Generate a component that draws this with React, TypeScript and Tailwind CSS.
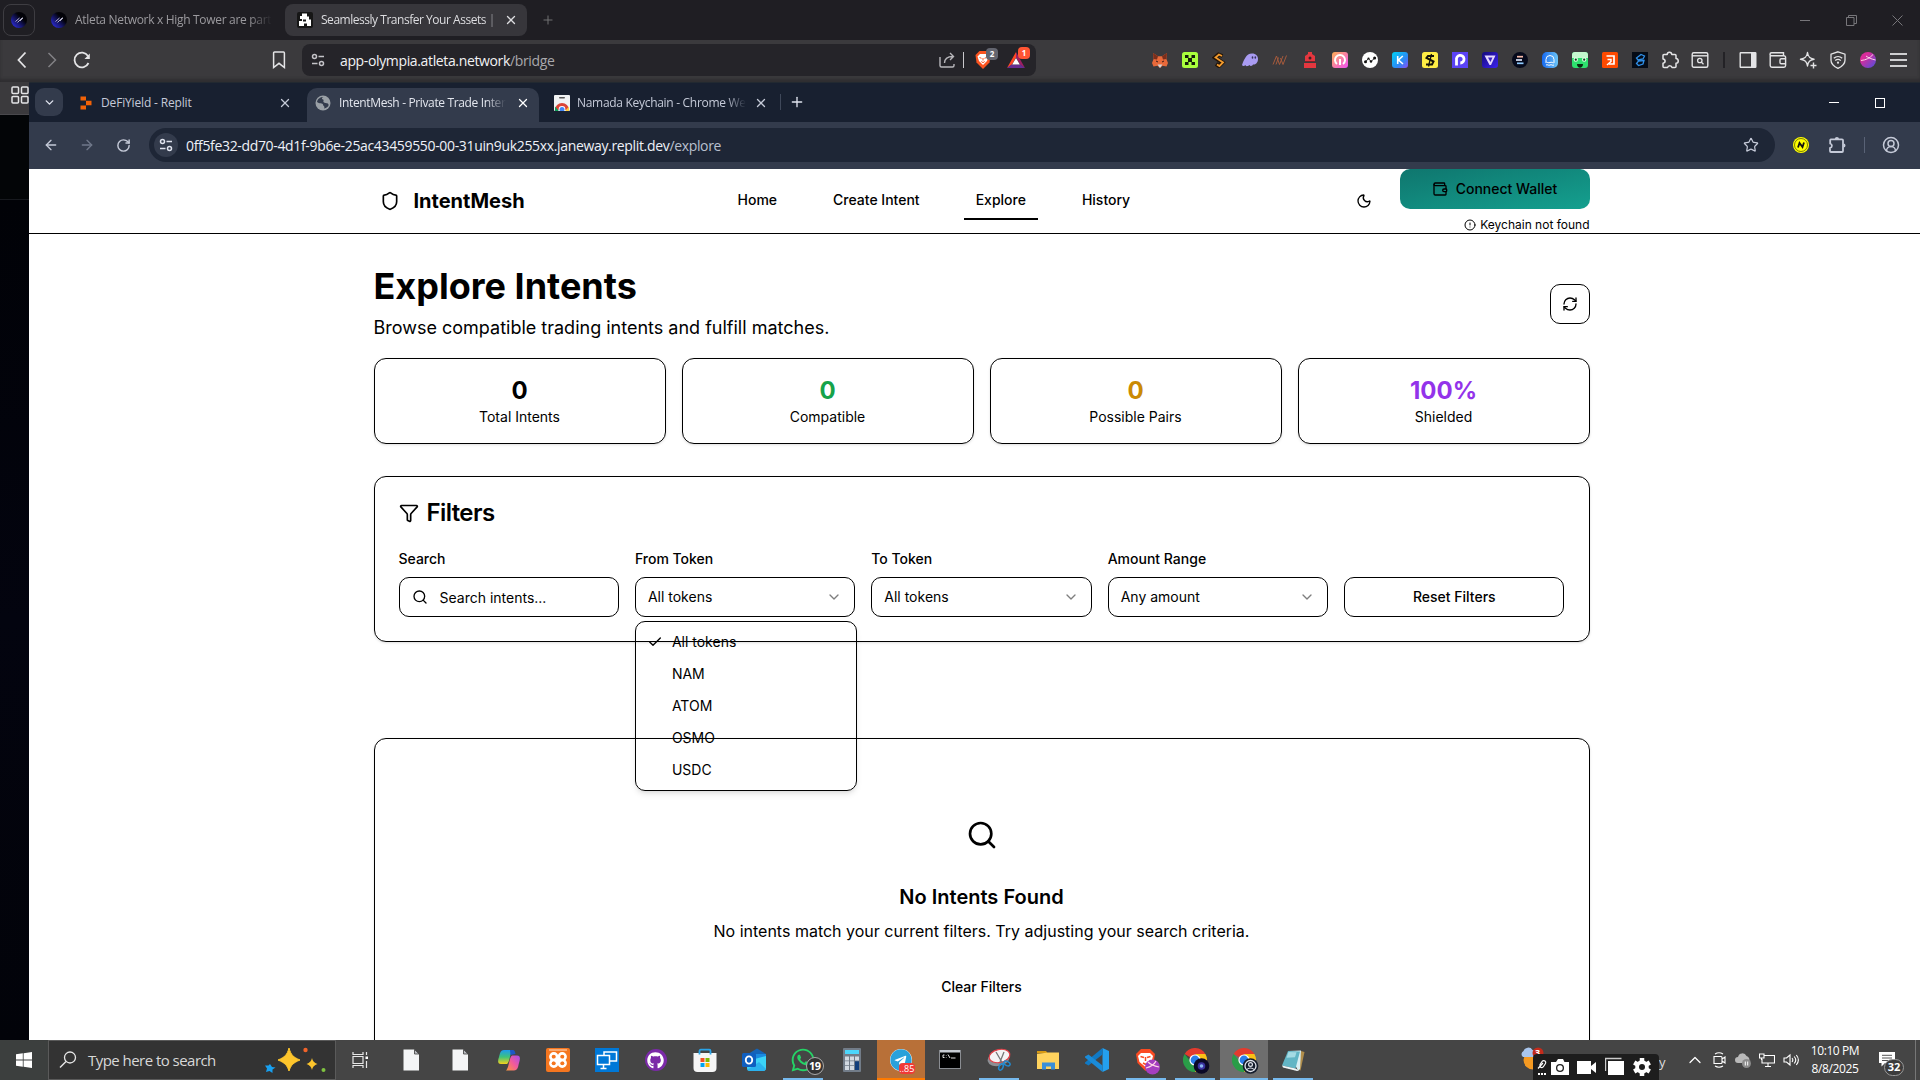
import React from "react";
import {
  Shield, Moon, Wallet, CircleAlert, RefreshCw, Search, ChevronDown, Check, Star, X, Plus,
  ArrowLeft, ArrowRight, RotateCw, CircleUserRound, ChevronUp, Funnel,
} from "lucide-react";
import { FaGithub, FaWhatsapp, FaTelegram } from "react-icons/fa";

const ui = "font-['Open_Sans','Noto_Sans',sans-serif]";

type SvgProps = { s?: number; vb?: string; className?: string; children: React.ReactNode };
const Svg = ({ s = 16, vb = "0 0 16 16", className = "", children }: SvgProps) => (
  <svg width={s} height={s} viewBox={vb} fill="none" className={`block shrink-0 ${className}`}>{children}</svg>
);

const Slot = ({ w, children, className = "" }: { w: string; children?: React.ReactNode; className?: string }) => (
  <div className={`flex h-full shrink-0 items-center justify-center ${w} ${className}`}>{children}</div>
);

const Atleta = () => (
  <Svg>
    <defs><linearGradient id="atl" x1="1" y1="0" x2="0" y2="1"><stop offset=".35" stopColor="#020208" /><stop offset="1" stopColor="#3434ff" /></linearGradient></defs>
    <circle cx="8" cy="8" r="8" fill="url(#atl)" />
    <path d="M4.500 9.500l4-3.500M6.500 10.500l5-5M9 9l3-3" stroke="#c5c5d8" strokeWidth=".9" />
  </Svg>
);

const Tune = ({ c }: { c: string }) => (
  <Svg s={16} className={c}>
    <circle cx="4.500" cy="4.500" r="2" stroke="currentColor" strokeWidth="1.500" />
    <path d="M8.500 4.500H14M2 11.500h5.500" stroke="currentColor" strokeWidth="1.500" />
    <circle cx="11.500" cy="11.500" r="2" stroke="currentColor" strokeWidth="1.500" />
  </Svg>
);

const extensions: React.ReactNode[] = [
  <Svg><path d="M1 1l5 3.200h4L15 1l-.6 6L16 11l-1.500 3.500-4-.8L8 16l-2.500-2.300-4 .8L0 11l1.600-4z" fill="#e8693a" /><path d="M1 1l5 3.200-1 3.300-3.400-.5zM15 1l-5 3.200 1 3.300 3.400-.5z" fill="#7a2e1c" /><path d="M5.500 12.500h5L8 16z" fill="#cdd3d8" /><path d="M4 9l2 1M12 9l-2 1" stroke="#3b1a18" /></Svg>,
  <Svg><rect width="16" height="16" rx="2.500" fill="#a9ff3c" /><path d="M3 3h3.500v3H3zM9.500 3H13v3H9.500zM6 6h4v4H6zM3 10h3.500v3H3zM9.500 10H13v3H9.500z" fill="#14200a" /></Svg>,
  <Svg><path d="M10.500 4L6.500 2.500 3 5.500l7.500 5-3.500 3.500-3-2" stroke="#221408" strokeWidth="4" /><path d="M10 4L7 2.500 3.500 5.500l7.500 5L7.500 14 5 12.500" stroke="#f19a2e" strokeWidth="1.800" /></Svg>,
  <Svg><path d="M0 13C2 8 4 1.500 10 1.500c4 0 6 2.500 6 5.500 0 4-3 6-5 5.500-1 2-3 1.500-3.500.5C5 15 3.500 14 3.500 13 2 14.500.5 14 0 13z" fill="#a99bf2" /><ellipse cx="10.500" cy="5.500" rx=".8" ry="1.200" fill="#37325a" /><ellipse cx="13.300" cy="5.500" rx=".8" ry="1.200" fill="#37325a" /></Svg>,
  <Svg><path d="M1 12.500L4.500 4l3 8.500L11 4M4 12.500L6.500 5.500M8.500 6l2.500 6.500L14.500 3.500" stroke="#a65a3c" strokeWidth="1" /></Svg>,
  <Svg><path d="M6 0h4v2l3 2v6H3V4l3-2z" fill="#e4373f" /><rect x="2" y="11" width="12" height="5" fill="#e4373f" /><circle cx="8" cy="6" r="1.500" fill="#3b2024" /><path d="M3 9.500h10" stroke="#7c2129" /></Svg>,
  <Svg><defs><linearGradient id="pk" x1="0" y1="0" x2="1" y2="1"><stop stopColor="#ffb054" /><stop offset="1" stopColor="#f04ff5" /></linearGradient></defs><rect width="16" height="16" rx="3" fill="url(#pk)" /><path d="M5 12a5 5 0 1 1 6 0" stroke="#fff" strokeWidth="2" /><path d="M8 7v6" stroke="#fff" strokeWidth="2" /></Svg>,
  <Svg><circle cx="8" cy="8" r="8" fill="#fff" /><path d="M3.500 9.800l3-3.300L9 9.500 12.800 6" stroke="#111" strokeWidth=".9" /><circle cx="3.500" cy="9.800" r="1.500" fill="#111" /><circle cx="6.500" cy="6.500" r="1.100" fill="#111" /><circle cx="9" cy="9.500" r="1.200" fill="#111" /><circle cx="12.600" cy="6" r="1.500" fill="#111" /></Svg>,
  <Svg><defs><linearGradient id="kp" x1="0" y1="0" x2="1" y2="1"><stop stopColor="#00d2f5" /><stop offset=".6" stopColor="#2b8cf4" /><stop offset="1" stopColor="#8a4df5" /></linearGradient></defs><rect width="16" height="16" rx="3" fill="url(#kp)" /><path d="M5.700 4v8M10.800 4L6.500 8l4.500 4" stroke="#fff" strokeWidth="1.600" /></Svg>,
  <Svg><rect width="16" height="16" rx="2.500" fill="#ffee45" /><path d="M12 4H6L4.500 6 11.500 9.500 10 12.500H4" stroke="#15140a" strokeWidth="2" /><path d="M9.500 2L6.500 14.500" stroke="#15140a" strokeWidth="1.300" /></Svg>,
  <Svg><rect width="16" height="16" fill="#5b43f5" /><path d="M4.500 13.500V8a3.800 3.800 0 1 1 3.800 3" stroke="#fff" strokeWidth="2.800" /></Svg>,
  <Svg><defs><linearGradient id="vv" x1="0" y1="0" x2="1" y2="1"><stop stopColor="#140a7a" /><stop offset="1" stopColor="#3d22ee" /></linearGradient></defs><rect width="16" height="16" rx="3" fill="url(#vv)" /><path d="M2.500 3.500h11L9 13H7.500z" fill="#e6d8ff" /><path d="M6 5.500h4.500L8.500 10z" fill="#3a22c0" /></Svg>,
  <Svg><circle cx="8" cy="8" r="8" fill="#060a1c" /><path d="M5 4.700h6" stroke="#f4b9a8" strokeWidth="1.700" /><path d="M4 8h6" stroke="#dfe8ff" strokeWidth="1.700" /><path d="M5 11.300h6.500" stroke="#8ecbff" strokeWidth="1.700" /></Svg>,
  <Svg><defs><linearGradient id="oc"><stop stopColor="#1769f0" /><stop offset="1" stopColor="#6cc5f7" /></linearGradient></defs><rect width="16" height="16" rx="5" fill="url(#oc)" /><path d="M4 10V7.500a4 4 0 0 1 8 0V10M3.500 10.500c1.500-1 3 1 4.500 0s3 1 4.500 0M4 13c1.500-1 2.500 1 4 0s2.500 1 4 0" stroke="#fff" strokeWidth="1" /></Svg>,
  <Svg><rect width="16" height="16" rx="3" fill="#2ee06e" /><path d="M0 6V3a3 3 0 0 1 3-3h10a3 3 0 0 1 3 3v3z" fill="#c4f8cf" /><circle cx="3.800" cy="7.500" r="2.200" fill="#dcffe2" /><circle cx="12.200" cy="7.500" r="2.200" fill="#dcffe2" /><circle cx="3.800" cy="7.700" r="1.100" fill="#0c3a1a" /><circle cx="12.200" cy="7.700" r="1.100" fill="#0c3a1a" /><path d="M5 12h6c0 5-6 5-6 0z" fill="#082a12" /></Svg>,
  <Svg><rect width="16" height="16" rx="1.500" fill="#ff4a00" /><path d="M4.500 4h7.500v8H7" stroke="#fff" strokeWidth="1.700" /><path d="M5.500 7.500h3.500v2L5 13" stroke="#fff" strokeWidth="1.500" /></Svg>,
  <Svg><rect width="16" height="16" fill="#050b16" /><path d="M4.500 6L9 2.500 12.500 4 11 7 6 8 4.500 6zM12 8.500L6.500 9 4.500 11.500l2 2 4.500-1.500z" stroke="#2f8fe8" strokeWidth="1.300" /></Svg>,
];

const Puzzle = () => (
  <Svg s={18} vb="0 0 18 18" className="text-[#e4e4e6]"><path d="M2 4.500a1 1 0 0 1 1-1h3.200C6 .7 10.500.2 10.800 3.500H14a1 1 0 0 1 1 1v3c3 .3 3 4.500 0 4.800V15.500a1 1 0 0 1-1 1h-3c-.4-2.500-4-2.500-4.400 0H3a1 1 0 0 1-1-1v-3.200c2.800-.4 2.800-4 0-4.400z" stroke="currentColor" strokeWidth="1.500" strokeLinejoin="round" /></Svg>
);

function OuterTabs() {
  return (
    <div className="flex h-10 shrink-0 items-center bg-[#1f1e23] text-[12px] text-[#9b9a9e]">
      <div className="ml-[3px] flex h-8 w-8 items-center justify-center rounded-lg border border-[#3e3d42]"><Atleta /></div>
      <div className="ml-[16px]"><Atleta /></div>
      <div className="ml-[8px] w-[197px] whitespace-nowrap tracking-[-0.31px] [mask-image:linear-gradient(to_right,black_88%,transparent)]">Atleta Network x High Tower are part</div>
      <div className="ml-[13px] flex h-8 w-[242px] items-center rounded-lg bg-[#37363b] text-[#dddde0]">
        <div className="ml-[12px]">
          <Svg><rect width="16" height="16" rx="2" fill="#161616" /><path d="M5 1.500h5v3h2v3h2V14h-4v-2.500H7V14H2V9h3V7H3V4h2z" fill="#fff" /><path d="M6 7.500h3v2H6z" fill="#161616" /></Svg>
        </div>
        <div className="ml-[8px] w-[173px] whitespace-nowrap tracking-[-0.47px] [mask-image:linear-gradient(to_right,black_94%,#0006)]">Seamlessly Transfer Your Assets |</div>
        <X size={14} strokeWidth={2.200} className="ml-[10px]" />
      </div>
      <Plus size={14} strokeWidth={1.600} className="ml-[14px] text-[#77767a]" />
      <div className="ml-auto flex h-full items-center text-[#77767a]">
        <Slot w="w-[46px]"><div className="h-px w-[10px] bg-current" /></Slot>
        <Slot w="w-[46px]"><Svg s={11} vb="0 0 11 11"><path d="M.5 2.500h7.500v8H.5zM2.500 2.500v-2h8v8H8" stroke="currentColor" /></Svg></Slot>
        <Slot w="w-[46px]"><Svg s={11} vb="0 0 11 11"><path d="M.5.5l10 10M10.500.5l-10 10" stroke="currentColor" /></Svg></Slot>
      </div>
    </div>
  );
}

function OuterToolbar() {
  return (
    <div className="flex h-[42px] shrink-0 items-center bg-[#3b3a3d] pb-[2px] text-[#e4e4e6] shadow-[inset_0_-3px_3px_#2f2e31]">
      <Slot w="w-[30px]" className="ml-[7px]"><Svg s={18} vb="0 0 18 18"><path d="M12.500 1.500L5.500 9l7 7.500" stroke="currentColor" strokeWidth="1.800" /></Svg></Slot>
      <Slot w="w-[30px]"><Svg s={18} vb="0 0 18 18" className="text-[#828185]"><path d="M5.500 2l7 7-7 7" stroke="currentColor" strokeWidth="1.500" /></Svg></Slot>
      <Slot w="w-[30px]"><Svg s={18} vb="0 0 18 18"><path d="M15.500 12A7.300 7.300 0 1 1 15 5" stroke="currentColor" strokeWidth="1.800" /><path d="M16.800 2.500v5.500h-5.300z" fill="currentColor" /></Svg></Slot>
      <Slot w="w-[30px]" className="ml-[167px]"><Svg s={18} vb="0 0 18 18"><path d="M4.500 1h9a.9.9 0 0 1 .9.9V16.500L9 12.300 3.600 16.500V1.900A.9.9 0 0 1 4.500 1z" stroke="currentColor" strokeWidth="1.500" /></Svg></Slot>
      <div className="ml-[8px] flex h-8 w-[734px] items-center rounded-lg bg-[#252429]">
        <div className="ml-[8px]"><Tune c="text-[#c4c3c8]" /></div>
        <div className="ml-[14px] text-[14px] tracking-[-0.36px] text-[#f2f2f4]">app-olympia.atleta.network<span className="text-[#a9a8ac]">/bridge</span></div>
        <div className="ml-auto flex h-full items-center">
          <Slot w="w-[20px]"><Svg s={18} vb="0 0 18 18" className="text-[#b8b7bb]"><path d="M2 6v8.500a1.500 1.500 0 0 0 1.500 1.500h11a1.500 1.500 0 0 0 1.500-1.500V13M6.500 12c0-4 2.500-6.500 8.500-6.500M12 2l3.500 3.500L12 9" stroke="currentColor" strokeWidth="1.400" /></Svg></Slot>
          <div className="ml-[6px] h-4 w-px bg-[#c9c8cc]" />
          <div className="relative ml-[10px]">
            <Svg s={18} vb="0 0 18 18"><path d="M5.500 0h7L16.500 4l-1 7.500L9 18l-6.500-6.500L1.500 4z" fill="#fb5420" /><path d="M6 3h6l2.500 2.500-1.500 4.500L9 14 5 10 3.500 5.500z" fill="#fff" /><path d="M5.500 6.500l2 .8M12.500 6.500l-2 .8M9 7v2.500M7.300 10.500L9 11.700l1.700-1.200" stroke="#fb5420" strokeWidth="1" /></Svg>
            <div className="absolute -top-[3px] left-[12px] flex h-3 w-3 items-center justify-center rounded bg-[#63656f] text-[8px] font-bold text-white">2</div>
          </div>
          <div className="relative mr-[11px] ml-[15px]">
            <Svg s={18} vb="0 0 18 18"><path d="M9 1v5.500L5 13.500 0 17z" fill="#ff4724" /><path d="M9 1l9 16-5-3.500-4-7z" fill="#9e1f63" /><path d="M0 17l4.500-3.500h9L18 17z" fill="#662d91" /><path d="M9 7l3.800 6.500H5.200z" fill="#fff" /></Svg>
            <div className="absolute -top-[4px] left-[11px] flex h-3 w-3 items-center justify-center rounded bg-[#ff5533] text-[8px] font-bold text-white">1</div>
          </div>
        </div>
      </div>
      <div className="ml-[109px] flex h-full items-center">
        {extensions.map((e, i) => <Slot key={i} w="w-[30px]">{e}</Slot>)}
        <Slot w="w-[30px]"><Puzzle /></Slot>
        <Slot w="w-[30px]"><Svg s={18} vb="0 0 18 18"><rect x="1.200" y="1.700" width="15.600" height="14.600" rx="1.500" stroke="currentColor" strokeWidth="1.400" /><path d="M1 4.800h16" stroke="currentColor" strokeWidth="1.400" /><circle cx="8.800" cy="9.500" r="2.200" stroke="currentColor" strokeWidth="1.300" /><path d="M10.500 11.200l2 2" stroke="currentColor" strokeWidth="1.300" /></Svg></Slot>
        <Slot w="w-[18px]"><div className="h-4 w-[2px] bg-[#232226]" /></Slot>
        <Slot w="w-[30px]"><Svg s={18} vb="0 0 18 18"><rect x="1.200" y="1.700" width="15.600" height="14.600" rx=".5" stroke="currentColor" strokeWidth="1.400" /><path d="M12 2h5v14h-5z" fill="currentColor" /></Svg></Slot>
        <Slot w="w-[30px]"><Svg s={18} vb="0 0 18 18"><path d="M1.200 4v10.500a1.700 1.700 0 0 0 1.700 1.700h12a1.700 1.700 0 0 0 1.700-1.700V6.500a1.700 1.700 0 0 0-1.700-1.700H2.500a1.200 1.200 0 0 1 0-3H14.500v3M17 7.800h-4.800a1.200 1.200 0 0 0-1.200 1.200v2.500a1.200 1.200 0 0 0 1.200 1.200H17" stroke="currentColor" strokeWidth="1.400" /></Svg></Slot>
        <Slot w="w-[30px]"><Svg s={18} vb="0 0 18 18"><path d="M8.500 1.500c.6 4.500 2.200 6.100 6.500 6.800-4.300.6-5.900 2.200-6.500 6.700C7.900 10.500 6.200 8.900 1.500 8.300 6.200 7.600 7.900 6 8.500 1.500zM14.500 11.500v6M11.500 14.500h6" stroke="currentColor" strokeWidth="1.400" strokeLinejoin="round" /></Svg></Slot>
        <Slot w="w-[30px]"><Svg s={18} vb="0 0 18 18"><path d="M9 .8l7 2.400v6c0 4-3.500 6.500-7 8.200-3.500-1.700-7-4.200-7-8.200v-6zM4.800 7.300c2.500-2.300 6-2.300 8.400 0M6.200 9.600c1.700-1.500 4-1.500 5.600 0" stroke="currentColor" strokeWidth="1.300" /><circle cx="9" cy="11.700" r="1.100" fill="currentColor" /></Svg></Slot>
        <Slot w="w-[30px]"><Svg><defs><linearGradient id="prf" x1="0" y1="0" x2="1" y2="1"><stop offset=".3" stopColor="#d92c9b" /><stop offset="1" stopColor="#4b4fe0" /></linearGradient></defs><circle cx="8" cy="8" r="8" fill="url(#prf)" /><path d="M1 8.500c5-.5 9-2.500 12-6M6 4c2.500 2 5.500 3 9.500 4" stroke="#ffd6e6" strokeWidth="1" /></Svg></Slot>
        <Slot w="w-[30px]"><div className="flex w-[17px] flex-col gap-[4px]"><div className="h-[2px] bg-[#cfcfd1]" /><div className="h-[2px] bg-[#cfcfd1]" /><div className="h-[2px] bg-[#cfcfd1]" /></div></Slot>
      </div>
    </div>
  );
}

function InnerChrome() {
  return (
    <>
      <div className="flex h-10 shrink-0 items-end border-t border-[#222931] bg-[#182030] text-[12px] text-[#c5cad8]">
        <div className="mb-[6px] ml-[6px] flex h-7 w-7 items-center justify-center rounded-[9px] bg-[#333b4c]"><ChevronDown size={13} strokeWidth={2.600} className="text-[#dfe3ee]" /></div>
        <div className="flex h-[34px] w-[244px] items-center pb-[5px]">
          <Svg className="ml-[15px]"><path d="M2.500 1.500h5.500v4H2.500zM8 5.800h5.500v4.400H8zM2.500 10.500h5.500v4H2.500z" fill="#f26207" /></Svg>
          <div className="ml-[7px] tracking-[-0.16px]">DeFiYield - Replit</div>
          <X size={14} strokeWidth={2.200} className="mr-[15px] ml-auto" />
        </div>
        <div className="flex h-[34px] w-[232px] items-center rounded-t-[10px] bg-[#333b4c] pb-[5px] text-[#e3e6ee]">
          <Svg className="ml-[8px]"><circle cx="8" cy="8" r="7.500" fill="#9aa0a6" /><path d="M8.500 2c-2 .5-2 2-.5 2.500s-.5 2 1 3 4 0 4.500 2-2 3.500-4.500 4c1.500-2-1-2.500-1-4S4 9 2 7C2.500 4 5 2 8.500 2z" fill="#333b4c" /></Svg>
          <div className="ml-[8px] w-[167px] whitespace-nowrap tracking-[-0.36px] [mask-image:linear-gradient(to_right,black_88%,transparent)]">IntentMesh - Private Trade Inter</div>
          <X size={14} strokeWidth={2.200} className="mr-auto ml-[10px] text-white" />
        </div>
        <div className="flex h-[34px] w-[241px] items-center pb-[5px]">
          <Svg className="ml-[15px]"><rect width="16" height="16" rx="1" fill="#f1f3f4" /><rect x="5" y="2" width="6" height="1.600" rx=".8" fill="#555" /><path d="M1 15a7 7 0 0 1 14 0z" fill="#db4437" /><path d="M1 11.500L5 16H1z" fill="#0f9d58" /><path d="M15 11.500L11 16h4z" fill="#ffcd40" /><circle cx="8" cy="14.500" r="3.400" fill="#fff" /><circle cx="8" cy="14.500" r="2.500" fill="#4285f4" /></Svg>
          <div className="ml-[7px] w-[169px] whitespace-nowrap tracking-[-0.3px] [mask-image:linear-gradient(to_right,black_88%,transparent)]">Namada Keychain - Chrome We</div>
          <X size={14} strokeWidth={2.200} className="ml-[8px]" />
        </div>
        <div className="mb-[12px] h-4 w-px bg-[#3f485a]" />
        <Plus size={16} strokeWidth={2} className="mb-[12px] ml-[8px] text-[#dfe3ee]" />
        <div className="ml-auto flex h-full items-center text-white">
          <Slot w="w-[46px]"><div className="h-px w-[10px] bg-current" /></Slot>
          <Slot w="w-[46px]"><div className="h-[10px] w-[10px] border border-white" /></Slot>
          <div className="w-[17px]" />
        </div>
      </div>
      <div className="flex h-[47px] shrink-0 items-center bg-[#333b4c] pb-px text-[#c5cad8]">
        <Slot w="w-[36px]" className="ml-[4px]"><ArrowLeft size={16} strokeWidth={2} /></Slot>
        <Slot w="w-[36px]"><ArrowRight size={16} strokeWidth={2} className="text-[#70788a]" /></Slot>
        <Slot w="w-[36px]"><RotateCw size={15} strokeWidth={2.300} /></Slot>
        <div className="ml-[8px] flex h-[34px] w-[1626px] items-center rounded-full bg-[#1e2636]">
          <div className="ml-[5px] flex h-6 w-6 items-center justify-center rounded-full bg-[#333b4c]"><Tune c="text-[#dfe3ee]" /></div>
          <div className="ml-[8px] text-[14px] tracking-[-0.34px] text-[#eef1f8]">0ff5fe32-dd70-4d1f-9b6e-25ac43459550-00-31uin9uk255xx.janeway.replit.dev<span className="text-[#b9c0cf]">/explore</span></div>
          <Star size={16} strokeWidth={1.800} className="mr-[16px] ml-auto" />
        </div>
        <Slot w="w-[36px]" className="ml-[8px]"><Svg><circle cx="8" cy="8" r="8" fill="#ffff00" /><circle cx="8" cy="8" r="6.500" stroke="#44440a" strokeWidth=".7" /><path d="M5 10.500l1.500-4.500 3 4L11 5.500" stroke="#111" strokeWidth="1.800" /></Svg></Slot>
        <Slot w="w-[36px]"><Svg s={18} vb="0 0 18 18"><path d="M2.200 4.500A1 1 0 0 1 3 3.300h11a1 1 0 0 1 1 1V15a1 1 0 0 1-1 1H3a1 1 0 0 1-1-1v-3c2.500-.7 2.500-3.800.2-4.500z" stroke="currentColor" strokeWidth="1.800" /><path d="M6.800 3a2.100 2.100 0 0 1 4.200 0zM15.500 7.500a2 2 0 0 1 0 4z" fill="currentColor" /></Svg></Slot>
        <Slot w="w-[18px]"><div className="h-4 w-px bg-[#596276]" /></Slot>
        <Slot w="w-[36px]"><CircleUserRound size={18} strokeWidth={2} /></Slot>
      </div>
    </>
  );
}

const Stat = ({ v, l, c }: { v: string; l: string; c: string }) => (
  <div className="flex-1 rounded-xl border border-black p-4 text-center shadow-sm">
    <div className={`text-2xl font-bold ${c}`}>{v}</div>
    <div className="text-sm">{l}</div>
  </div>
);

const Select = ({ label, value, menu }: { label: string; value: string; menu?: React.ReactNode }) => (
  <div className="relative flex flex-col gap-2">
    <div className="text-sm font-medium">{label}</div>
    <div className="flex h-10 items-center justify-between rounded-[10px] border border-black px-3 text-sm">
      {value}<ChevronDown size={16} className="opacity-50" />
    </div>
    {menu}
  </div>
);

const tokens = ["All tokens", "NAM", "ATOM", "OSMO", "USDC"];

function Page() {
  return (
    <div className="min-h-0 flex-1 overflow-hidden bg-white font-['Inter',sans-serif] text-black">
      <div className="h-[65px] border-b border-black pl-[344.5px]">
        <div className="flex h-16 w-[1216px] justify-between">
          <div className="flex w-[352px] items-center">
            <div className="flex h-8 w-8 items-center justify-center"><Shield size={20} /></div>
            <div className="ml-2 text-xl font-bold">IntentMesh</div>
          </div>
          <div className="flex flex-1 items-center gap-8 pb-[2px] text-sm font-medium">
            <div className="px-3">Home</div>
            <div className="px-3">Create Intent</div>
            <div className="relative px-3 py-2">Explore<div className="absolute inset-x-0 -bottom-[2px] h-[2px] bg-black" /></div>
            <div className="px-3">History</div>
          </div>
          <div className="flex">
            <div className="mr-[28px] flex items-center"><Moon size={16} /></div>
            <div className="flex flex-col items-end">
              <div className="flex h-10 w-[190px] items-center justify-center gap-2 rounded-[10px] bg-gradient-to-br from-[#0f766e] to-[#14a08f] text-sm font-medium"><Wallet size={16} />Connect Wallet</div>
              <div className="mt-2 flex items-center gap-1 text-xs"><CircleAlert size={12} />Keychain not found</div>
            </div>
          </div>
        </div>
      </div>
      <div className="ml-[344.5px] w-[1216px] pt-8">
        <div className="flex items-center justify-between">
          <div>
            <div className="text-4xl font-bold">Explore Intents</div>
            <div className="mt-[8px] text-lg">Browse compatible trading intents and fulfill matches.</div>
          </div>
          <div className="flex h-10 w-10 items-center justify-center rounded-[10px] border border-black"><RefreshCw size={16} /></div>
        </div>
        <div className="mt-4 flex gap-4">
          <Stat v="0" l="Total Intents" c="text-black" />
          <Stat v="0" l="Compatible" c="text-[#16a34a]" />
          <Stat v="0" l="Possible Pairs" c="text-[#ca8a04]" />
          <Stat v="100%" l="Shielded" c="text-[#9333ea]" />
        </div>
        <div className="mt-8 rounded-xl border border-black p-6 shadow-sm">
          <div className="flex h-6 items-center gap-2 text-2xl font-semibold tracking-tight"><Funnel size={20} />Filters</div>
          <div className="mt-6 grid grid-cols-5 gap-4">
            <div className="flex flex-col gap-2">
              <div className="text-sm font-medium">Search</div>
              <div className="flex h-10 items-center gap-3 rounded-[10px] border border-black px-3 text-sm"><Search size={16} /><span className="pt-[2px]">Search intents...</span></div>
            </div>
            <Select label="From Token" value="All tokens" menu={
              <div className="absolute top-[72px] left-0 z-10 w-[222px] rounded-[10px] border border-black p-1 text-sm shadow-md">
                {tokens.map((t, i) => (
                  <div key={t} className="flex h-8 items-center">
                    <div className="flex w-8 justify-center pr-[2px]">{i === 0 && <Check size={16} />}</div>{t}
                  </div>
                ))}
              </div>
            } />
            <Select label="To Token" value="All tokens" />
            <Select label="Amount Range" value="Any amount" />
            <div className="flex items-end"><div className="flex h-10 w-full items-center justify-center rounded-[10px] border border-black text-sm font-medium">Reset Filters</div></div>
          </div>
        </div>
        <div className="mt-24 flex h-[420px] flex-col items-center rounded-xl border border-black pt-20 shadow-sm">
          <Search size={32} />
          <div className="mt-[32px] text-xl font-semibold">No Intents Found</div>
          <div className="mt-[8px]">No intents match your current filters. Try adjusting your search criteria.</div>
          <div className="mt-[34px] text-sm font-medium">Clear Filters</div>
        </div>
      </div>
    </div>
  );
}

const FileIcon = () => <Svg s={24} vb="0 0 24 24"><path d="M4.500 1.500h11l4.500 4.500v16.500h-15.500z" fill="#f4f5f6" /><path d="M15.500 1.500v4.500h4.500z" fill="#b9bcc0" stroke="#3c3c3c" strokeWidth=".8" /></Svg>;
const Chrome = ({ children }: { children: React.ReactNode }) => (
  <Svg s={28} vb="0 0 28 28" className="-mb-1 ml-1">
    <path d="M12 12L1.600 6A12 12 0 0 1 22.400 6H12z" fill="#e33b2e" />
    <path d="M12 12L22.400 6A12 12 0 0 1 12 24z" fill="#fbc116" />
    <path d="M1.600 6A12 12 0 0 0 12 24l4-9-8-1z" fill="#2a9d48" />
    <path d="M12 6h10.400l-4 8z" fill="#fbc116" />
    <circle cx="12" cy="12" r="5.600" fill="#fff" /><circle cx="12" cy="12" r="4.400" fill="#2b7de9" />
    {children}
  </Svg>
);

type App = { icon: React.ReactNode; bg?: string; line?: string };
const apps: App[] = [
  { icon: <FileIcon /> },
  { icon: <FileIcon /> },
  { icon: <Svg s={24} vb="0 0 24 24"><defs><linearGradient id="cp1" x1="0" y1="0" x2="0" y2="1"><stop stopColor="#1d9bf0" /><stop offset=".5" stopColor="#3fc37a" /><stop offset="1" stopColor="#f7d21c" /></linearGradient><linearGradient id="cp2" x1="1" y1="0" x2="0" y2="1"><stop stopColor="#a64df0" /><stop offset=".5" stopColor="#f25a9a" /><stop offset="1" stopColor="#fa9a3c" /></linearGradient></defs><path d="M7 2h9c-3 2-3 12-6 14H4c-4 0-3-4-2-7s1-7 5-7z" fill="url(#cp1)" /><path d="M13 2h3c1.500 0 2 2 2.500 4l-5 1z" fill="#1d56c8" /><path d="M17 22.500H9c3-2 3-13 6-15h5c4 0 3 4 2 7.500s-1 7.500-5 7.500z" fill="url(#cp2)" /></Svg> },
  { icon: <Svg s={24} vb="0 0 24 24"><rect width="24" height="24" rx="2" fill="#f5761f" /><rect x="3" y="1" width="18" height="2" fill="#f9ab73" /><circle cx="7.800" cy="8.700" r="3.300" stroke="#fff" strokeWidth="2.800" /><circle cx="16.200" cy="8.700" r="3.300" stroke="#fff" strokeWidth="2.800" /><circle cx="7.800" cy="15.300" r="3.300" stroke="#fff" strokeWidth="2.800" /><circle cx="16.200" cy="15.300" r="3.300" stroke="#fff" strokeWidth="2.800" /><path d="M10 9.500h4v5h-4z" fill="#fff" /><circle cx="7.500" cy="8.700" r="1.800" fill="#f5761f" /><circle cx="16.500" cy="8.700" r="1.800" fill="#f5761f" /><circle cx="7.500" cy="15.300" r="1.800" fill="#f5761f" /><circle cx="16.500" cy="15.300" r="1.800" fill="#f5761f" /></Svg> },
  { icon: <Svg s={24} vb="0 0 24 24"><rect width="24" height="24" fill="#0078d7" /><path d="M9 7.500V4h12.500v9H15M2.500 7.500h12v9h-12zM8.500 16.500v4M5.500 20.500h6" stroke="#fff" strokeWidth="1.500" /></Svg> },
  { icon: <div className="flex h-[22px] w-[22px] items-center justify-center rounded-full bg-[#7b2aa8] text-white"><FaGithub size={17} /></div> },
  { icon: <Svg s={24} vb="0 0 24 24"><path d="M6.500 7V3a1.300 1.300 0 0 1 1.300-1.300h8.400A1.300 1.300 0 0 1 17.500 3v4" stroke="#2aa5ea" strokeWidth="1.800" /><path d="M.5 5h23v15a4 4 0 0 1-4 4h-15a4 4 0 0 1-4-4z" fill="#f5f5f5" /><path d="M6.500 5v1.500M17.500 5v1.500" stroke="#2aa5ea" strokeWidth="1.800" /><path d="M7.500 10h4v4h-4z" fill="#f25022" /><path d="M12.500 10h4v4h-4z" fill="#7fba00" /><path d="M7.500 15h4v4h-4z" fill="#00a4ef" /><path d="M12.500 15h4v4h-4z" fill="#ffb900" /></Svg> },
  { icon: <Svg s={24} vb="0 0 24 24"><path d="M6 6l9-5.500L24 6v7H6z" fill="#1464b8" /><path d="M12 6l12 0v4l-12 5z" fill="#1a8ae0" /><path d="M5 13l19-5v12a3 3 0 0 1-3 3H8a3 3 0 0 1-3-3z" fill="#3bd3f7" /><path d="M5 22L17 14l7 7-2 2H8z" fill="#2bb2ee" /><rect x="0" y="5" width="14" height="14" rx="1.500" fill="#0f5fc0" /><ellipse cx="7" cy="12" rx="3.200" ry="3.600" stroke="#fff" strokeWidth="1.900" /></Svg> },
  { line: "bg-[#76b9ed]", icon: <div className="relative text-[#25d366]"><FaWhatsapp size={26} /><div className="absolute top-[10px] left-[16px] flex h-[18px] w-[18px] items-center justify-center rounded-full border border-[#aaa] bg-[#333] text-[11px] font-bold tracking-tighter text-white">19</div></div> },
  { icon: <Svg s={24} vb="0 0 24 24"><rect x="3" width="18" height="24" rx="1" fill="#727c88" /><rect x="5" y="2" width="14" height="4" fill="#4cd6fb" /><path d="M5 8.500h4v4H5zM10 8.500h4v4h-4zM15 8.500h4v4h-4zM5 13.300h4v4H5zM10 13.300h4v4h-4zM5 18h4v4H5zM10 18h4v4h-4z" fill="#d3dae2" /><path d="M15 13.300h4V22h-4z" fill="#123f7c" /></Svg> },
  { bg: "bg-[#b87038]", line: "bg-[#ff7a00]", icon: <div className="relative"><div className="rounded-full bg-white text-[#2aa1da]"><FaTelegram size={22} /></div><div className="absolute top-[14px] left-[9px] flex h-[11px] w-4 items-center justify-center rounded-sm bg-[#f03a37] text-[9px] leading-none text-white">..85</div></div> },
  { icon: <Svg s={24} vb="0 0 24 24"><rect x="1.500" y="2.500" width="21" height="18" fill="#000" stroke="#8a8d92" /><rect x="2" y="2" width="20" height="2.500" fill="#c6cbd2" /><path d="M6.500 7H5v2.500h1.500M8.300 7.300v.5M8.300 9v.5M10 6.500l2 3.500M13 10h4.500" stroke="#ddd" strokeWidth="1" /></Svg> },
  { line: "bg-[#76b9ed]", icon: <Svg s={24} vb="0 0 24 24"><ellipse cx="11.500" cy="11" rx="11" ry="7" transform="rotate(-12 11.500 11)" fill="#8c8f94" /><ellipse cx="12.500" cy="8" rx="10.500" ry="6.500" transform="rotate(-12 12.500 8)" fill="#f4f4f5" stroke="#e04048" strokeWidth="1.200" /><path d="M9 4l7 12M17 4l-4 10" stroke="#777" strokeWidth="1.300" /><ellipse cx="14" cy="19" rx="2" ry="3.300" transform="rotate(25 14 19)" stroke="#2289cf" strokeWidth="1.500" /><ellipse cx="20" cy="15.500" rx="3.300" ry="2" transform="rotate(25 20 15.500)" stroke="#2289cf" strokeWidth="1.500" /></Svg> },
  { icon: <Svg s={24} vb="0 0 24 24"><path d="M1 3h9l2 2.500H1z" fill="#d79a14" /><path d="M1 6l11-1.500h11V21H1z" fill="#ffd35e" /><path d="M6 21.500v-7h13v7h-4v-3h-5v3z" fill="#3a8fd8" /></Svg> },
  { icon: <Svg s={24} vb="0 0 24 24"><path d="M17.500 0L24 3v18l-6.500 3z" fill="#24a0ee" /><path d="M17.500 0v6.500L3.500 17.500 0 15.500v-1z" fill="#1079c4" /><path d="M17.500 24v-6.500L3.500 6.500 0 8.500v1z" fill="#1a8bd8" /></Svg> },
  { line: "bg-[#76b9ed]", icon: <Svg s={26} vb="0 0 26 26" className="-mb-1 ml-1"><path d="M6 0h9l5 5-1.500 9-8 8-8-8L1 5z" fill="#fb4b22" /><path d="M6 4h9l3 3-1.500 6-6 5-6-5L3 7z" fill="#fff" /><path d="M5.500 7.500l3.500 1M15.500 7.500l-3.500 1M10.500 8v4M8 14l2.500 1.500L13 14" stroke="#fb4b22" strokeWidth="1.500" /><circle cx="17.500" cy="18" r="7.500" fill="#a53ec0" /><path d="M11 19c4-1 8-3 10-7M13 13c3 3 6 4 11 5" stroke="#ffd6e6" strokeWidth="1.200" /></Svg> },
  { line: "bg-[#76b9ed]", icon: <Chrome><circle cx="18.500" cy="18" r="7.800" fill="#0b0926" /><circle cx="18.500" cy="18" r="3.800" fill="#3a32a0" /><circle cx="18.500" cy="18" r="1.800" fill="#8ab7f0" /></Chrome> },
  { bg: "bg-[#6e6e6e]", line: "bg-[#76b9ed]", icon: <Chrome><circle cx="18.500" cy="18" r="7.800" fill="#141c2c" /><circle cx="18.500" cy="18" r="5.500" stroke="#e2e6ee" strokeWidth="1.300" /><circle cx="18.500" cy="16.500" r="1.900" stroke="#e2e6ee" strokeWidth="1.200" /><path d="M15 21.500c1.500-2 5.500-2 7 0" stroke="#e2e6ee" strokeWidth="1.200" /></Chrome> },
  { line: "bg-[#76b9ed]", icon: <Svg s={24} vb="0 0 24 24"><path d="M20 3l3.500 1-4 18.500-3-1z" fill="#b08d4a" /><path d="M7 3l13-.5L19 21l-2 1.500z" fill="#d9eef3" /><path d="M7 3l12 .5-4.500 17L1 17.500z" fill="#62b5c5" /><path d="M1 17.500l13.500 3 3.500 2-2 .5-14-3.500z" fill="#eef5f7" /><path d="M7.500 4l8 .3-1.500 5-8.500.5z" fill="#a5dbe4" /></Svg> },
];

function Taskbar() {
  return (
    <div className={`flex h-10 shrink-0 bg-[#454545] text-white ${ui}`}>
      <Slot w="w-[48px]" className="bg-[#3c3f3e]"><Svg><path d="M0 2.300L6.800 1.300v6.300H0zM7.600 1.200L16 0v7.600H7.600zM0 8.400h6.800v6.300L0 13.700zM7.600 8.400H16V16l-8.400-1.200z" fill="#fff" /></Svg></Slot>
      <div className="flex w-[288px] items-center border border-[#5a5a5a] bg-[#333]">
        <Svg s={18} vb="0 0 18 18" className="ml-[10px]"><circle cx="11" cy="6.500" r="5.500" stroke="#e6e6e6" strokeWidth="1.300" /><path d="M7 10.500L1 16.500" stroke="#e6e6e6" strokeWidth="1.400" /></Svg>
        <div className="ml-[11px] text-[15px] tracking-[-0.54px] whitespace-nowrap text-[#d8d8d8]">Type here to search</div>
        <svg width="62" height="28" viewBox="0 0 62 28" className="mr-[9px] ml-auto">
          <path d="M25 2c2 7 4 9 11 12-7 3-9 5-11 11-2-6-4-8-11-11 7-3 9-5 11-12z" fill="#fdc52c" stroke="#fdc52c" strokeLinejoin="round" />
          <path d="M48 12c1 3.500 2 4.500 5.500 6-3.500 1.500-4.500 2.500-5.500 6-1-3.500-2-4.500-5.500-6 3.500-1.500 4.500-2.500 5.500-6z" fill="#fdc52c" />
          <path d="M6 18l2 3 3.500.5-3 2 0 3.500-3-2-3.500 1 1-3.500-2-3 3.500 0z" fill="#18a0f0" /><circle cx="41.500" cy="4" r="2.200" fill="#f1632a" /><circle cx="59.500" cy="24" r="2" fill="#7fc241" />
        </svg>
      </div>
      <Slot w="w-[48px]"><Svg s={18} vb="0 0 18 18"><path d="M2 5.500h10v7H2zM2 1v2.500h10V1M2 17v-2.500h10V17M15.500 1v3M15.500 10v7" stroke="#e8e8e8" strokeWidth="1.200" /><path d="M14.500 5.500h2.500V8h-2.500z" fill="#fff" /></Svg></Slot>
      <div className="ml-[2.5px] flex gap-[1.04px]">
        {apps.map((a, i) => (
          <div key={i} className={`relative flex w-12 items-center justify-center ${a.bg ?? ""}`}>
            {a.icon}
            {a.line && <div className={`absolute bottom-0 h-[2px] ${a.bg ? "inset-x-0" : "inset-x-1"} ${a.line}`} />}
          </div>
        ))}
      </div>
      <div className="relative ml-auto w-[163px]">
        <Svg s={26} vb="0 0 26 26" className="mt-[6px]"><circle cx="13" cy="14" r="9.500" fill="#f59a22" /><path d="M3 11a3.500 3.500 0 0 1 .5-6 5 5 0 0 1 9-1A3.500 3.500 0 0 1 13 11z" fill="#a9c6ee" /><circle cx="18" cy="7" r="5.500" fill="#c42b1c" /></Svg>
        <div className="absolute top-[6px] left-[15px] text-[9px] font-bold">3</div>
        <div className="absolute top-[14px] left-[139px] text-[13px] leading-4 text-[#ddd]">y</div>
        <div className="absolute top-[14px] left-[13px] flex h-[26px] w-[126px] items-center rounded-t bg-[#1d1d1d] pl-[3px]">
          <div className="flex w-3 flex-col items-center gap-1"><Svg s={10} vb="0 0 10 10"><path d="M3 5.500l2.500-3.500a2 2 0 0 1 3 2.500L6.500 7.500a2 2 0 0 1-3.500 0zM1 9.500L6 4" stroke="#fff" strokeWidth="1.200" /></Svg><div className="flex gap-[1px]"><i className="size-[2px] bg-white" /><i className="size-[2px] bg-white" /><i className="size-[2px] bg-white" /></div></div>
          <Svg s={20} vb="0 0 20 20" className="ml-[2px]"><path d="M1 5h5l2-3h5l1.500 3H19v13H1z" fill="#fff" /><circle cx="10" cy="11" r="4" fill="#1d1d1d" /><circle cx="10" cy="11" r="2.700" fill="#fff" /></Svg>
          <Svg s={20} vb="0 0 20 20" className="ml-[7px]"><path d="M0 4h14v5l5-4v11l-5-4v5H0z" fill="#fff" /></Svg>
          <Svg s={20} vb="0 0 20 20" className="ml-[8px]"><path d="M.5 14V1.500h16" stroke="#ccc" strokeWidth="1.400" /><path d="M3 4h16v14H3z" fill="#fff" /></Svg>
          <Svg s={20} vb="0 0 20 20" className="ml-[7px]"><path d="M10 1v18M2.200 5.500l15.600 9M2.200 14.500l15.600-9" stroke="#fff" strokeWidth="4.500" /><circle cx="10" cy="10" r="6.800" fill="#fff" /><circle cx="10" cy="10" r="3" fill="#1d1d1d" /></Svg>
        </div>
      </div>
      <Slot w="w-[24px]"><ChevronUp size={20} strokeWidth={1.500} /></Slot>
      <Slot w="w-[24px]"><Svg><path d="M3 4.500h7a1 1 0 0 1 1 1v5a1 1 0 0 1-1 1H3zM11 7l3-2v6l-3-2M4 2c2.500-1.500 5.500-1.500 8 0M4 14c2.500 1.500 5.500 1.500 8 0" stroke="#fff" strokeWidth="1.100" /></Svg></Slot>
      <Slot w="w-[24px]"><Svg><path d="M3 11a3 3 0 0 1 0-6 4.500 4.500 0 0 1 8.500-1A3.500 3.500 0 0 1 14 9v2z" fill="#b9b9b9" /><circle cx="11.500" cy="11.500" r="4.500" fill="#8c8c8c" /><path d="M10.300 9.500v4M12.700 9.500v4" stroke="#fff" /></Svg></Slot>
      <Slot w="w-[24px]"><Svg><path d="M5.500 3.500h10v7.500H3V7M9 11v3M6 14.500h6M.5 2h4.500v4H.5zM2.500 6v2" stroke="#fff" strokeWidth="1.100" /></Svg></Slot>
      <Slot w="w-[24px]"><Svg><path d="M1 6h2.500L7 3v10L3.500 10H1zM9 6c1 1.200 1 2.800 0 4M11.200 4.500c1.800 2 1.800 5 0 7M13.300 3c2.500 3 2.500 7 0 10" stroke="#fff" strokeWidth="1.100" /></Svg></Slot>
      <div className="flex w-[64px] flex-col items-center justify-center pb-[1px] text-[12px] leading-[18px] tracking-[-0.4px] whitespace-nowrap"><div>10:10 PM</div><div>8/8/2025</div></div>
      <div className="relative w-12 shrink-0">
        <Svg className="mt-[11px] ml-[12px]"><path d="M0 1h16v11H6l-3.500 3.500V12H0z" fill="#fff" /><path d="M3 4.300h10M3 7h10M3 9.500h6" stroke="#555" /></Svg>
        <div className="absolute top-[19px] left-[17px] flex h-[17px] w-[20px] items-center justify-center rounded-full border border-[#999] bg-[#3c3c3c] text-[11px] font-bold">32</div>
      </div>
      <div className="w-[5px] border-l border-[#777]" />
    </div>
  );
}

export default function App() {
  return (
    <div className={`flex h-[1080px] w-[1920px] flex-col overflow-hidden bg-[#030507] ${ui}`}>
      <OuterTabs />
      <OuterToolbar />
      <div className="flex min-h-0 flex-1">
        <div className="flex w-[29px] shrink-0 flex-col overflow-hidden">
          <div className="h-[33px] shrink-0 border-b border-[#4a494d] bg-[#3b3a3d] pt-[4px] pl-[11px]">
            <Svg s={18} vb="0 0 18 18"><path d="M2 1h4.500a1 1 0 0 1 1 1v4.500a1 1 0 0 1-1 1H2a1 1 0 0 1-1-1V2a1 1 0 0 1 1-1zM11.500 1H16a1 1 0 0 1 1 1v4.500a1 1 0 0 1-1 1h-4.500a1 1 0 0 1-1-1V2a1 1 0 0 1 1-1zM2 10.500h4.500a1 1 0 0 1 1 1V16a1 1 0 0 1-1 1H2a1 1 0 0 1-1-1v-4.500a1 1 0 0 1 1-1zM11.500 10.500H16a1 1 0 0 1 1 1V16a1 1 0 0 1-1 1h-4.500a1 1 0 0 1-1-1v-4.500a1 1 0 0 1 1-1z" stroke="#e4e4e6" strokeWidth="1.500" /></Svg>
          </div>
          <div className="h-[85px] shrink-0 border-b border-[#17191e] bg-[#030507]" />
          <div className="flex-1 bg-gradient-to-b from-[#010207] via-[#03040f] to-[#020309]" />
        </div>
        <div className="flex min-w-0 flex-1 flex-col">
          <InnerChrome />
          <Page />
        </div>
      </div>
      <Taskbar />
    </div>
  );
}
